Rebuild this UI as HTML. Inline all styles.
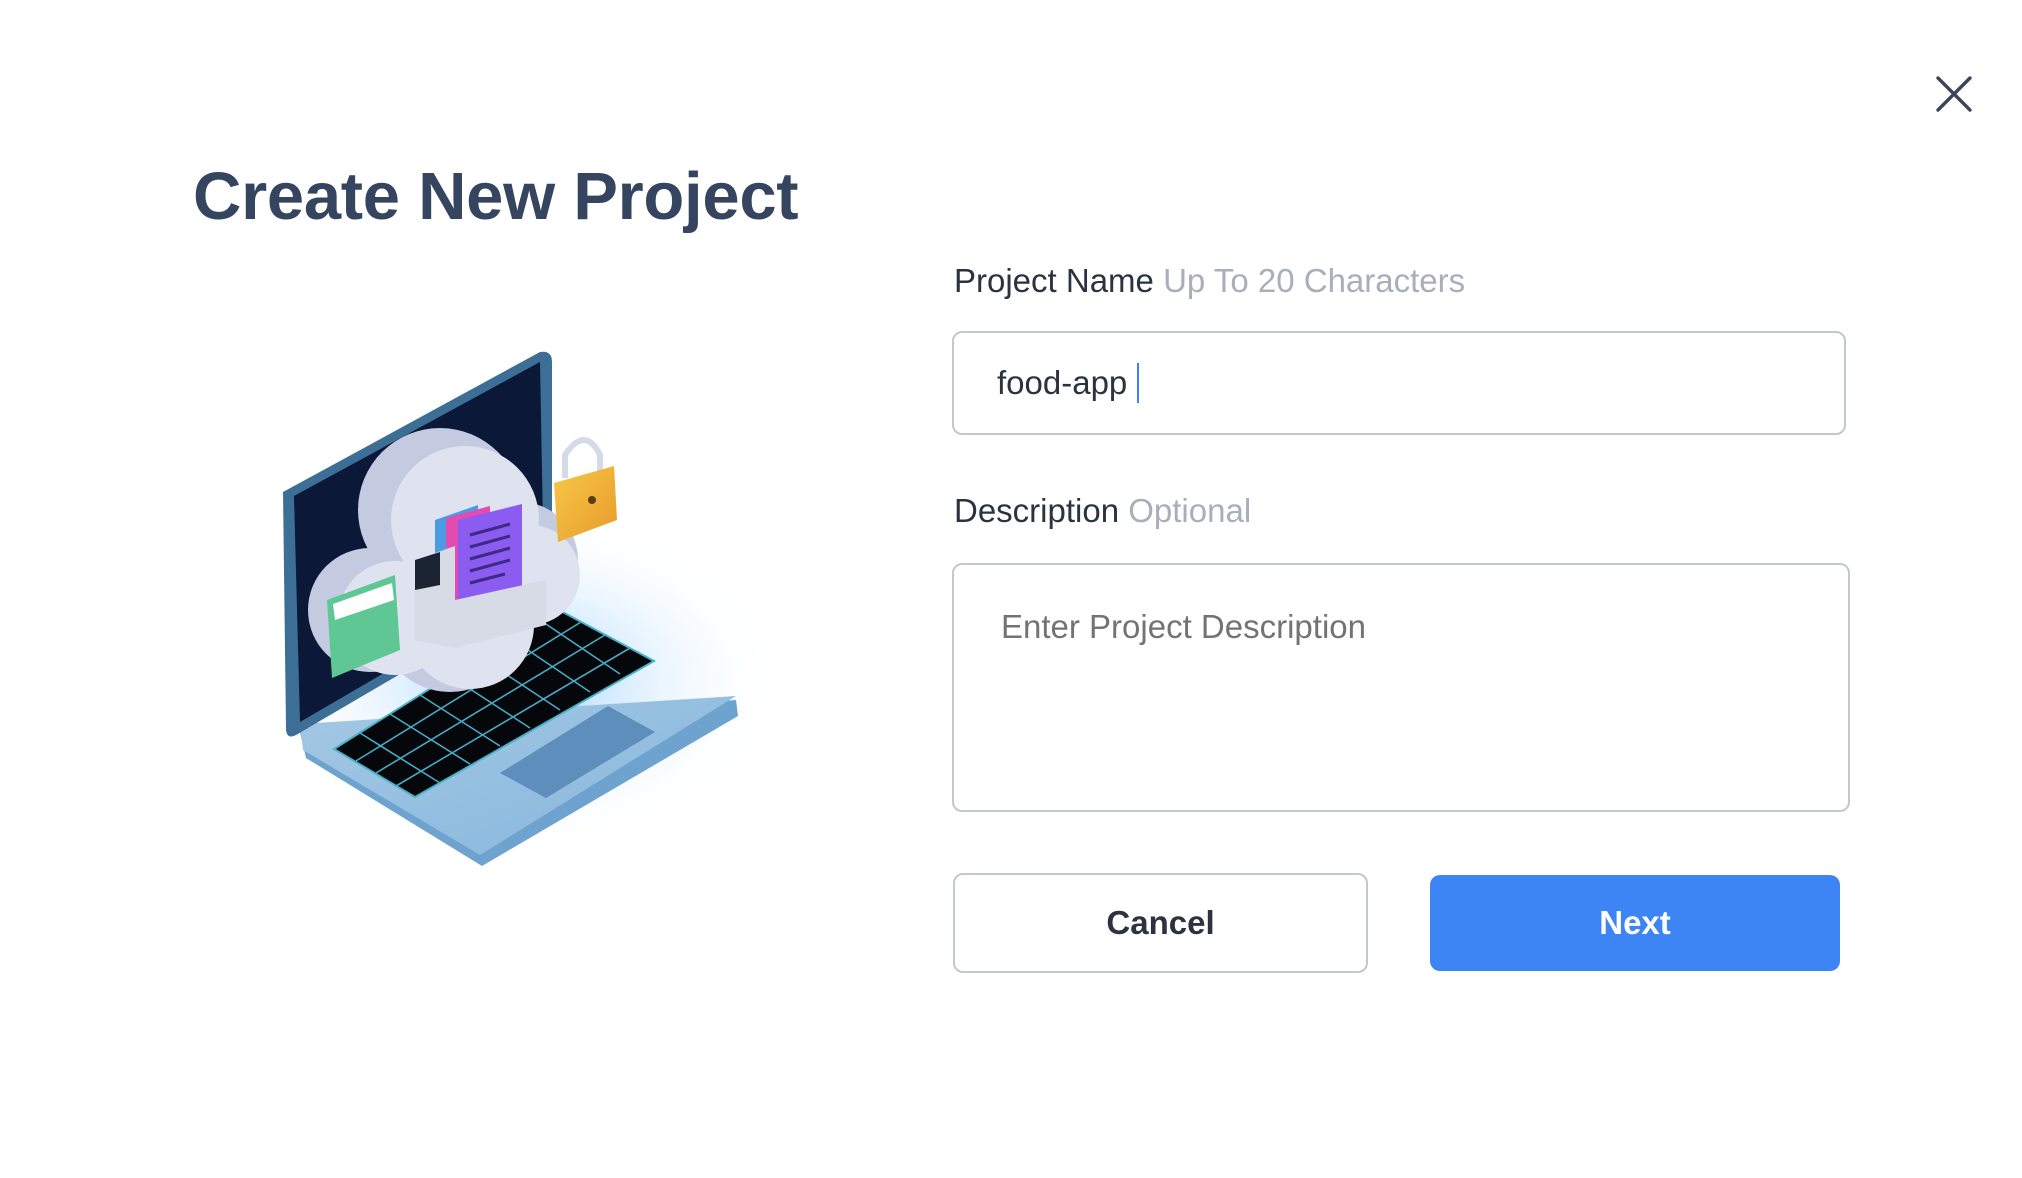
<!DOCTYPE html>
<html><head><meta charset="utf-8"><style>
html,body{margin:0;padding:0;background:#fff;width:2022px;height:1178px;overflow:hidden;font-family:"Liberation Sans",Arial,sans-serif;}
.abs{position:absolute;}
h1{position:absolute;left:193px;top:163px;margin:0;font-size:67px;font-weight:bold;color:#354560;line-height:1;letter-spacing:-0.3px;}
.lbl{position:absolute;font-size:33px;color:#2b3340;line-height:1;}
.lbl span{color:#a9afba;}
.box{position:absolute;border:2px solid #c3c7cf;border-radius:10px;box-sizing:border-box;background:#fff;}
.btn{position:absolute;box-sizing:border-box;border-radius:10px;font-size:33px;font-weight:bold;display:flex;align-items:center;justify-content:center;}
</style></head><body>
<svg class="abs" style="left:1935px;top:75px" width="38" height="38" viewBox="0 0 38 38"><path d="M3 3L35 35M35 3L3 35" stroke="#3a4658" stroke-width="3.4" stroke-linecap="round"/></svg>
<h1>Create New Project</h1>

<svg class="abs" style="left:190px;top:340px" width="600" height="560" viewBox="190 340 600 560">
<defs>
<radialGradient id="gl" cx="0.5" cy="0.5" r="0.5"><stop offset="0" stop-color="#7fc4ff" stop-opacity="0.8"/><stop offset="1" stop-color="#ffffff" stop-opacity="0"/></radialGradient>
<linearGradient id="bs" x1="0" y1="0" x2="1" y2="1"><stop offset="0" stop-color="#a4c8e4"/><stop offset="1" stop-color="#86b6dc"/></linearGradient>
<linearGradient id="lk" x1="0" y1="0" x2="1" y2="1"><stop offset="0" stop-color="#f7c94a"/><stop offset="1" stop-color="#e89a28"/></linearGradient>
</defs>
<ellipse cx="520" cy="680" rx="260" ry="170" fill="url(#gl)"/>
<path d="M300 732 L736 700 L738 716 L482 866 L306 758 Z" fill="#6fa3cf"/>
<path d="M300 724 L736 696 L480 855 L303 750 Z" fill="url(#bs)"/>
<path d="M334 749 L557 609 L654 661 L415 797 Z" fill="#05070a" stroke="#4cb0c8" stroke-width="2"/>
<g stroke="#4aa9c4" stroke-width="1.6">
<path d="M356 761 L581 622 M376 773 L605 635 M396 786 L630 648"/>
<path d="M360 733 L440 783 M390 714 L470 764 M420 695 L500 746 M450 676 L530 728 M480 657 L560 710 M510 638 L590 692 M540 620 L620 674"/>
</g>
<path d="M500 773 L608 706 L655 732 L546 798 Z" fill="#5e8fbc"/>
<path d="M283 492 L540 352 Q552 350 552 362 L552 585 L296 735 Q286 740 286 728 Z" fill="#3d6f96"/>
<path d="M294 496 L540 362 L544 580 L300 722 Z" fill="#0b1838"/>
<g fill="#c4cbe0">
<circle cx="440" cy="510" r="82"/><circle cx="370" cy="610" r="62"/><circle cx="520" cy="560" r="58"/><circle cx="450" cy="620" r="72"/>
</g>
<g fill="#dfe3ef"><circle cx="465" cy="520" r="74"/><circle cx="395" cy="618" r="57"/><circle cx="530" cy="575" r="50"/><circle cx="470" cy="625" r="64"/></g>
<path d="M327 600 L395 575 L400 650 L332 678 Z" fill="#5fc794"/>
<path d="M333 604 L392 583 L394 600 L335 620 Z" fill="#fff"/>
<path d="M435 520 L478 505 L478 610 L435 620 Z" fill="#4a9be4"/>
<path d="M446 518 L490 506 L490 612 L446 622 Z" fill="#e24bb0"/>
<path d="M458 520 L522 504 L522 600 L458 612 Z" fill="#8c5cf0"/>
<g stroke="#3b2a88" stroke-width="3"><path d="M470 535 L510 524 M470 547 L510 536 M470 559 L510 548 M470 571 L510 560 M470 583 L505 574"/></g>
<path d="M415 560 L455 546 L455 600 L546 580 L546 625 L455 648 L415 640 Z" fill="#d7dbe6"/>
<path d="M415 560 L440 552 L440 585 L415 590 Z" fill="#1b2433"/>
<path d="M565 478 L565 455 Q585 425 600 455 L600 478" fill="none" stroke="#d6dae6" stroke-width="6"/>
<path d="M554 483 L614 466 L617 520 L558 542 Z" fill="url(#lk)"/>
<circle cx="592" cy="500" r="4" fill="#5a3a10"/>
</svg>

<div class="lbl" style="left:954px;top:264px">Project Name <span>Up To 20 Characters</span></div>
<div class="box" style="left:952px;top:331px;width:894px;height:104px"></div>
<div class="abs" style="left:997px;top:366px;font-size:33px;color:#2b3340;line-height:1">food-app</div>
<div class="abs" style="left:1137px;top:363px;width:2px;height:40px;background:#3b82f6"></div>

<div class="lbl" style="left:954px;top:494px">Description <span>Optional</span></div>
<div class="box" style="left:952px;top:563px;width:898px;height:249px"></div>
<div class="abs" style="left:1001px;top:610px;font-size:33px;color:#737373;line-height:1">Enter Project Description</div>

<div class="btn" style="left:953px;top:873px;width:415px;height:100px;border:2px solid #c3c7cf;color:#2b3340">Cancel</div>
<div class="btn" style="left:1430px;top:875px;width:410px;height:96px;background:#3d85f5;color:#fff">Next</div>
</body></html>
